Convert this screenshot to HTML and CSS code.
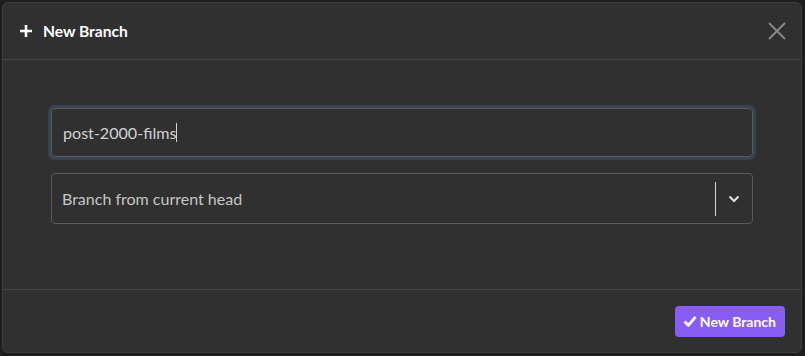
FILE: index.html
```html
<!DOCTYPE html>
<html lang="en">
<head>
    <meta charset="UTF-8">
    <meta name="viewport" content="width=device-width, initial-scale=1.0">
    <title>New Branch</title>
    <link rel="stylesheet" href="styles.css">
</head>
<body>
    <div class="modal">
        <div class="modal-header">
            <svg class="plus-icon" width="14" height="14" viewBox="0 0 14 14">
                <path d="M7 1v12M1 7h12" stroke="#fff" stroke-width="2.6" fill="none"/>
            </svg>
            <span class="modal-title">New Branch</span>
            <svg class="close-icon" width="18" height="18" viewBox="0 0 18 18">
                <path d="M1 1l16 16M17 1L1 17" stroke="#8a8a8a" stroke-width="1.8" fill="none"/>
            </svg>
        </div>
        <div class="modal-body">
            <div class="text-input">post-2000-films<span class="caret"></span></div>
            <div class="select">
                <span class="select-value">Branch from current head</span>
                <span class="select-sep"></span>
                <svg class="chevron" width="12" height="8" viewBox="0 0 12 8">
                    <path d="M1.5 1.5l4.5 4.5 4.5-4.5" stroke="#ddd" stroke-width="2.2" fill="none"/>
                </svg>
            </div>
        </div>
        <div class="modal-footer">
            <button class="primary-button">
                <svg width="14" height="12" viewBox="0 0 14 12">
                    <path d="M1.5 6.5l3.8 3.8L12.5 2" stroke="#fff" stroke-width="2.8" fill="none"/>
                </svg>
                New Branch
            </button>
        </div>
    </div>
</body>
</html>
```

FILE: styles.css
```css
body {
    margin: 0;
    padding: 2px;
    background-color: #1e1e1e;
    font-family: Lato, "Open Sans", sans-serif;
    overflow: hidden;
}
.modal {
    width: 798px;
    height: 349px;
    background-color: #303030;
    border: 1px solid #3e3e3e;
    border-radius: 6px;
    display: flex;
    flex-direction: column;
}
.modal-header {
    height: 56px;
    display: flex;
    align-items: center;
    padding: 0 15px 0 16px;
    border-bottom: 1px solid #464646;
}
.plus-icon {
    margin-right: 10px;
}
.modal-title {
    color: #fff;
    font-size: 15.6px;
    font-weight: bold;
    flex: 1;
}
.modal-body {
    flex: 1;
    padding: 48px 48px 0 48px;
    display: flex;
    flex-direction: column;
    gap: 16px;
}
.text-input {
    height: 47px;
    border: 1px solid #5c5c5c;
    border-radius: 4px;
    box-shadow: 0 0 0 3px #3a4350;
    padding: 0 11px;
    display: flex;
    align-items: center;
    color: #d2d2d2;
    font-size: 16.1px;
}
.caret {
    display: inline-block;
    width: 1px;
    height: 19px;
    background-color: #d2d2d2;
}
.select {
    height: 49px;
    border: 1px solid #5a5a5a;
    border-radius: 4px;
    display: flex;
    align-items: center;
    padding: 0 12px 0 10px;
    color: #c6c6c6;
    font-size: 16px;
}
.select-value {
    flex: 1;
}
.select-sep {
    width: 1px;
    height: 34px;
    background-color: #d8d8d8;
    margin-right: 12px;
}
.modal-footer {
    height: 62px;
    border-top: 1px solid #464646;
    display: flex;
    justify-content: flex-end;
    align-items: center;
    padding: 0 16px 0 0;
}
.primary-button {
    height: 31px;
    padding: 0 9px 0 8px;
    margin-top: 0;
    background-color: #8a5cf6;
    color: #fff;
    border: none;
    border-radius: 4px;
    font-family: inherit;
    font-size: 14px;
    font-weight: bold;
    display: flex;
    align-items: center;
    gap: 3px;
}
```
